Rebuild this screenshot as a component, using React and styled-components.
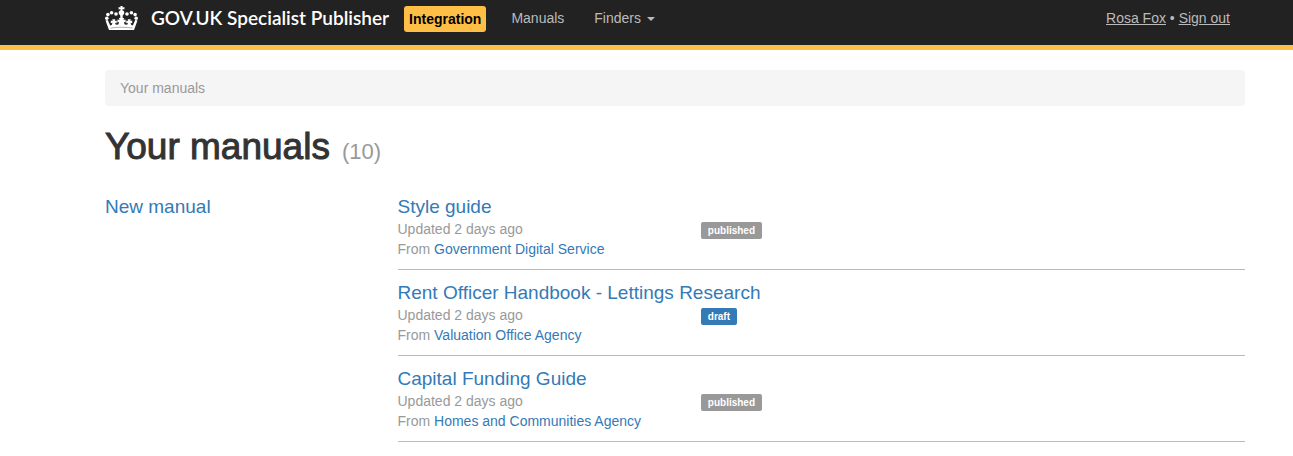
import React from "react";
import styled, { createGlobalStyle } from "styled-components";

const GlobalStyle = createGlobalStyle`
  *, *::before, *::after { box-sizing: border-box; }
  body {
    margin: 0;
    background: #fff;
    color: #333;
    font-family: "Liberation Sans", Arial, sans-serif;
    font-size: 14px;
    line-height: 20px;
  }
`;

const Container = styled.div`
  padding: 0 48px 0 105px;
`;

const Header = styled.header`
  background: #222;
  border-bottom: 5px solid #ffbf47;
`;

const Bar = styled(Container)`
  display: flex;
  align-items: flex-start;
  height: 45px;
  padding-top: 6px;
`;

const Brand = styled.a`
  display: flex;
  gap: 13px;
  color: #fff;
  font-family: Lato, "Gill Sans", sans-serif;
  font-size: 19px;
  font-weight: 600;
  line-height: 24px;
  text-decoration: none;
  white-space: nowrap;
`;

const Environment = styled.span`
  margin-left: 15px;
  padding: 3px 5px;
  border-radius: 3px;
  background: #ffbf47;
  color: #000;
  font-weight: bold;
`;

const Nav = styled.nav`
  display: flex;
  gap: 30px;
  margin-left: 25px;
  padding-top: 2px;
`;

const NavLink = styled.a`
  color: #bbb;
  text-decoration: none;
`;

const NavButton = styled.button`
  display: flex;
  align-items: center;
  gap: 6px;
  padding: 0;
  border: 0;
  background: none;
  color: #bbb;
  font: inherit;
`;

const Caret = styled.span`
  margin-top: 2px;
  border-top: 4px solid #bbb;
  border-left: 4px solid transparent;
  border-right: 4px solid transparent;
`;

const Account = styled.div`
  margin-left: auto;
  padding: 2px 15px 0 0;
  color: #bbb;
  white-space: nowrap;
`;

const AccountLink = styled.a`
  color: inherit;
`;

const Breadcrumb = styled.ol`
  margin: 20px 0;
  padding: 8px 15px;
  border-radius: 4px;
  background: #f5f5f5;
  color: #999;
  list-style: none;
`;

const Title = styled.h1`
  display: flex;
  align-items: baseline;
  gap: 12px;
  margin: 0 0 22px;
  font-size: 37px;
  font-weight: normal;
  line-height: 42px;
  -webkit-text-stroke: 1px #333;
`;

const Count = styled.small`
  color: #999;
  font-size: 22px;
  -webkit-text-stroke: 0;
`;

const Columns = styled.div`
  display: grid;
  grid-template-columns: minmax(0, 1fr) minmax(0, 3fr);
  column-gap: 10px;
`;

const Link = styled.a`
  color: #337ab7;
  text-decoration: none;
`;

const HeadingLink = styled(Link)`
  font-size: 19px;
  line-height: 24px;
`;

const List = styled.ul`
  margin: 0;
  padding: 0;
  list-style: none;
`;

const Item = styled.li`
  padding: 11px 0 10px;
  border-bottom: 1px solid #bbb;
  color: #999;

  &:first-child { padding-top: 0; }
`;

const ItemTitle = styled.h4`
  margin: 0;
  font-size: 19px;
  font-weight: normal;
  line-height: 24px;
`;

const Meta = styled.div`
  display: grid;
  grid-template-columns: 34fr 61fr;
  align-items: start;
`;

const Label = styled.span`
  justify-self: start;
  margin-top: 3px;
  padding: 3px 7px;
  border-radius: 2px;
  background: ${(p) => (p.$draft ? "#337ab7" : "#999")};
  color: #fff;
  font-size: 10px;
  font-weight: bold;
  line-height: 11px;
`;

const PEARLS = [
  [1.8, 12.2], [2.9, 8.6], [6.6, 6.7], [11, 8],
  [22, 8], [26.4, 6.7], [30.1, 8.6], [31.2, 12.2],
];

const Crown = () => (
  <svg width="33" height="24" viewBox="0 0 33 24" fill="#fff" aria-hidden="true">
    <path d="M15.3 0h2.4l-.3 1.4 2-.3v2.3l-2-.3.3 1.4c1.6.6 2.1 2.1 1.3 3.4L17.7 9.4v2.8h-2.4V9.4L14 7.9c-.8-1.3-.3-2.8 1.3-3.4l.3-1.4-2 .3V1.1l2 .3z" />
    {PEARLS.map(([x, y]) => (
      <circle key={`${x}-${y}`} cx={x} cy={y} r="1.8" />
    ))}
    <path d="M.5 14.5 2.8 13.9l2.4 5.5 1.5-.4.8-2.2-1.7.5v-2.8l1.9.5-.5-1.8h3.1l-.5 1.8 1.9-.5v2.8l-1.7-.5.8 2 2.5-.2.9-2.6-1.8.6v-3l2.1.5-.6-2.1h5.2l-.6 2.1 2.1-.5v3l-1.8-.6.9 2.6 2.5.2.8-2-1.7.5v-2.8l1.9.5-.5-1.8h3.1l-.5 1.8 1.9-.5v2.8l-1.7-.5.8 2.2 1.5.4 2.4-5.5 2.3.6L29 24H4z" />
    <path d="M5.5 22c7-1 15-1 22 0" fill="none" stroke="#777" strokeWidth=".6" />
  </svg>
);

const MANUALS = [
  { title: "Style guide", org: "Government Digital Service", status: "published" },
  { title: "Rent Officer Handbook - Lettings Research", org: "Valuation Office Agency", status: "draft" },
  { title: "Capital Funding Guide", org: "Homes and Communities Agency", status: "published" },
];

export default function App() {
  return (
    <>
      <GlobalStyle />
      <Header>
        <Bar>
          <Brand href="#">
            <Crown />
            GOV.UK Specialist Publisher
          </Brand>
          <Environment>Integration</Environment>
          <Nav>
            <NavLink href="#">Manuals</NavLink>
            <NavButton type="button">
              Finders
              <Caret />
            </NavButton>
          </Nav>
          <Account>
            <AccountLink href="#">Rosa Fox</AccountLink> •{" "}
            <AccountLink href="#">Sign out</AccountLink>
          </Account>
        </Bar>
      </Header>
      <Container as="main">
        <Breadcrumb>
          <li>Your manuals</li>
        </Breadcrumb>
        <Title>
          Your manuals <Count>(10)</Count>
        </Title>
        <Columns>
          <HeadingLink href="#">New manual</HeadingLink>
          <List>
            {MANUALS.map((m) => (
              <Item key={m.title}>
                <ItemTitle>
                  <Link href="#">{m.title}</Link>
                </ItemTitle>
                <Meta>
                  <div>
                    <div>Updated 2 days ago</div>
                    <div>
                      From <Link href="#">{m.org}</Link>
                    </div>
                  </div>
                  <Label $draft={m.status === "draft"}>{m.status}</Label>
                </Meta>
              </Item>
            ))}
          </List>
        </Columns>
      </Container>
    </>
  );
}
